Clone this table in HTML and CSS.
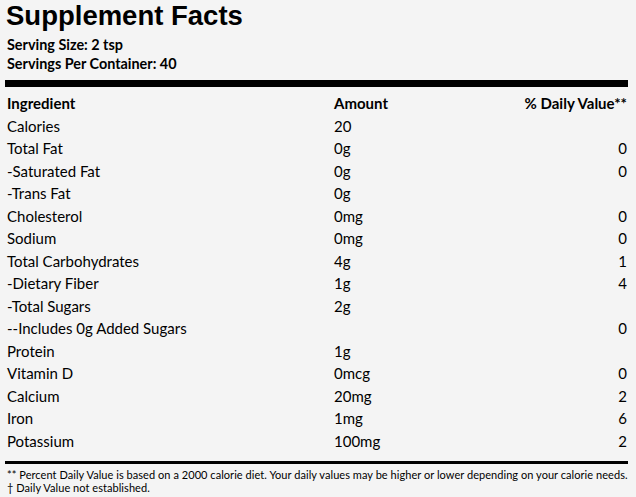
FILE: index.html
```html
<!DOCTYPE html>
<html lang="en">
<head>
<meta charset="utf-8">
<title>Supplement Facts</title>
<link rel="stylesheet" href="styles.css">
</head>
<body>
<div class="label">
  <h1 class="title">Supplement Facts</h1>
  <div class="serving">
    <div>Serving Size: 2 tsp</div>
    <div>Servings Per Container: 40</div>
  </div>
  <div class="rule-thick"></div>
  <div class="facts">
    <div class="row head"><span>Ingredient</span><span>Amount</span><span class="dv">% Daily Value**</span></div>
    <div class="row"><span>Calories</span><span>20</span><span class="dv"></span></div>
    <div class="row"><span>Total Fat</span><span>0g</span><span class="dv">0</span></div>
    <div class="row"><span>-Saturated Fat</span><span>0g</span><span class="dv">0</span></div>
    <div class="row"><span>-Trans Fat</span><span>0g</span><span class="dv"></span></div>
    <div class="row"><span>Cholesterol</span><span>0mg</span><span class="dv">0</span></div>
    <div class="row"><span>Sodium</span><span>0mg</span><span class="dv">0</span></div>
    <div class="row"><span>Total Carbohydrates</span><span>4g</span><span class="dv">1</span></div>
    <div class="row"><span>-Dietary Fiber</span><span>1g</span><span class="dv">4</span></div>
    <div class="row"><span>-Total Sugars</span><span>2g</span><span class="dv"></span></div>
    <div class="row"><span>--Includes 0g Added Sugars</span><span></span><span class="dv">0</span></div>
    <div class="row"><span>Protein</span><span>1g</span><span class="dv"></span></div>
    <div class="row"><span>Vitamin D</span><span>0mcg</span><span class="dv">0</span></div>
    <div class="row"><span>Calcium</span><span>20mg</span><span class="dv">2</span></div>
    <div class="row"><span>Iron</span><span>1mg</span><span class="dv">6</span></div>
    <div class="row"><span>Potassium</span><span>100mg</span><span class="dv">2</span></div>
  </div>
  <div class="rule-thin"></div>
  <div class="notes">
    <div>** Percent Daily Value is based on a 2000 calorie diet. Your daily values may be higher or lower depending on your calorie needs.</div>
    <div>† Daily Value not established.</div>
  </div>
</div>
</body>
</html>
```
FILE: styles.css
```css
html, body {
  margin: 0;
  padding: 0;
  background: #f4f4f4;
}
body {
  font-family: "Lato", "Liberation Sans", sans-serif;
  color: #000;
}
.label {
  width: 623px;
  padding: 0 0 0 5px;
}
.title {
  font-family: "Liberation Sans", Arial, sans-serif;
  font-weight: bold;
  font-size: 27.5px;
  line-height: 32px;
  margin: 0;
  padding: 0 0 0 1px;
}
.serving {
  font-weight: bold;
  font-size: 14.4px;
  line-height: 19px;
  padding: 3px 2px 0;
}
.rule-thick {
  height: 7px;
  background: #000;
  margin-top: 7px;
}
.facts {
  padding-top: 5px;
  font-size: 15px;
}
.row {
  display: grid;
  grid-template-columns: 327px 1fr auto;
  height: 22.5px;
  line-height: 22.5px;
  padding: 0 1px 0 2px;
}
.row.head {
  font-weight: bold;
}
.dv {
  text-align: right;
}
.rule-thin {
  height: 3px;
  background: #000;
  margin-top: 9px;
}
.notes {
  font-size: 11px;
  line-height: 13px;
  letter-spacing: 0.05px;
  white-space: nowrap;
  padding: 4px 0 0 2px;
}
```
